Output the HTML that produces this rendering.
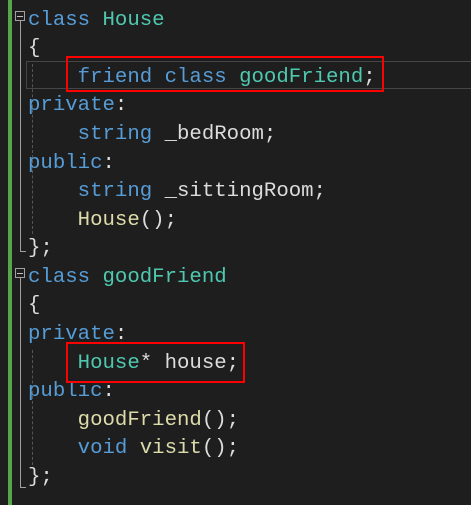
<!DOCTYPE html>
<html><head><style>
html,body{margin:0;padding:0;background:#1e1e1e;width:471px;height:505px;overflow:hidden;position:relative}
.l{position:absolute;left:28px;font-family:"Liberation Mono",monospace;font-size:20.7px;line-height:28.6px;color:#dcdcdc;white-space:pre;margin-top:3px}
.k{color:#569cd6}.t{color:#4ec9b0}.f{color:#dcdcaa}
.a{position:absolute}
</style></head><body>
<div class="a" style="left:8px;top:0;width:4px;height:505px;background:#57a64a"></div>
<div class="a" style="left:15px;top:11px;width:8px;height:8px;border:1px solid #a0a0a0"></div>
<div class="a" style="left:17px;top:16px;width:6px;height:1px;background:#c0c0c0"></div>
<div class="a" style="left:20px;top:21px;width:1px;height:230px;background:#a0a0a0"></div>
<div class="a" style="left:20px;top:251px;width:6px;height:1px;background:#a0a0a0"></div>
<div class="a" style="left:15px;top:268px;width:8px;height:8px;border:1px solid #a0a0a0"></div>
<div class="a" style="left:17px;top:273px;width:6px;height:1px;background:#c0c0c0"></div>
<div class="a" style="left:20px;top:278px;width:1px;height:209px;background:#a0a0a0"></div>
<div class="a" style="left:20px;top:487px;width:6px;height:1px;background:#a0a0a0"></div>
<div class="a" style="left:26px;top:61px;width:445px;height:26px;border:1px solid #464646;border-right:none"></div>
<div class="a" style="left:32px;top:64px;height:170px;border-left:1px dashed #555"></div>
<div class="a" style="left:32px;top:350px;height:115px;border-left:1px dashed #555"></div>
<div class="l" style="top:4px"><span class="k">class</span> <span class="t">House</span></div>
<div class="l" style="top:32px">{</div>
<div class="l" style="top:61px">    <span class="k">friend</span> <span class="k">class</span> <span class="t">goodFriend</span>;</div>
<div class="l" style="top:89px"><span class="k">private</span>:</div>
<div class="l" style="top:118px">    <span class="k">string</span> _bedRoom;</div>
<div class="l" style="top:147px"><span class="k">public</span>:</div>
<div class="l" style="top:175px">    <span class="k">string</span> _sittingRoom;</div>
<div class="l" style="top:204px">    <span class="f">House</span>();</div>
<div class="l" style="top:232px">};</div>
<div class="l" style="top:261px"><span class="k">class</span> <span class="t">goodFriend</span></div>
<div class="l" style="top:289px">{</div>
<div class="l" style="top:318px"><span class="k">private</span>:</div>
<div class="l" style="top:347px">    <span class="t">House</span>* house;</div>
<div class="l" style="top:375px"><span class="k">public</span>:</div>
<div class="l" style="top:404px">    <span class="f">goodFriend</span>();</div>
<div class="l" style="top:432px">    <span class="k">void</span> <span class="f">visit</span>();</div>
<div class="l" style="top:461px">};</div>
<div class="a" style="left:66px;top:56px;width:314px;height:32px;border:2px solid #f00"></div>
<div class="a" style="left:66px;top:342px;width:175px;height:37px;border:2px solid #f00"></div>
</body></html>
